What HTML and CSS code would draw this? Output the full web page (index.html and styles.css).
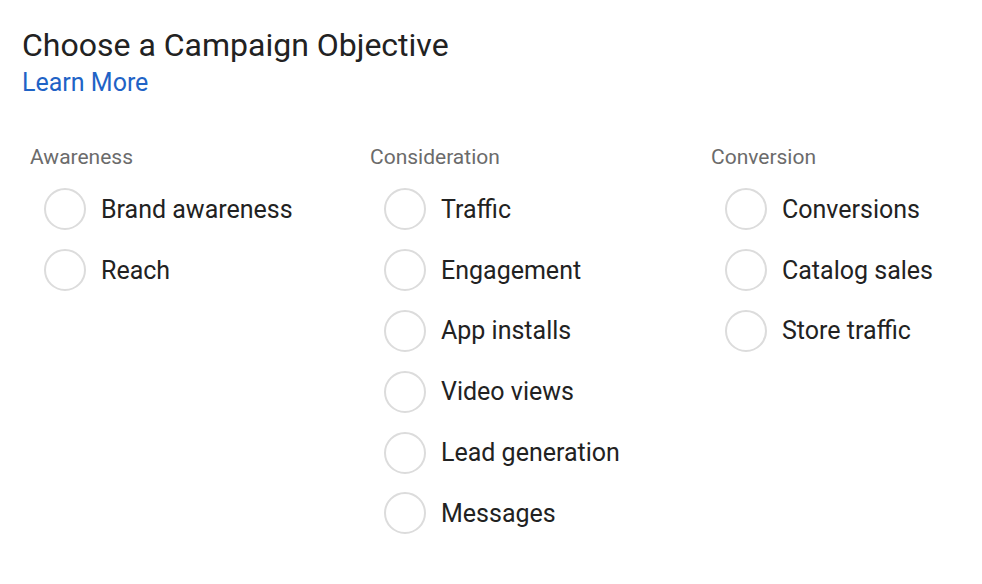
FILE: index.html
```html
<html lang="en">

<head>
    <meta charset="UTF-8">
    <meta name="viewport" content="width=device-width, initial-scale=1.0">
    <title>Campaign Objective</title>
    <link rel="stylesheet" href="styles.css">
</head>

<body>
    <div class="objective-container">
        <h1>Choose a Campaign Objective</h1>
        <a class="learn-more" href="#">Learn More</a>

        <div class="columns">
            <div class="column">
                <div class="column-title">Awareness</div>
                <label class="option"><span class="radio"></span>Brand awareness</label>
                <label class="option"><span class="radio"></span>Reach</label>
            </div>
            <div class="column">
                <div class="column-title">Consideration</div>
                <label class="option"><span class="radio"></span>Traffic</label>
                <label class="option"><span class="radio"></span>Engagement</label>
                <label class="option"><span class="radio"></span>App installs</label>
                <label class="option"><span class="radio"></span>Video views</label>
                <label class="option"><span class="radio"></span>Lead generation</label>
                <label class="option"><span class="radio"></span>Messages</label>
            </div>
            <div class="column">
                <div class="column-title">Conversion</div>
                <label class="option"><span class="radio"></span>Conversions</label>
                <label class="option"><span class="radio"></span>Catalog sales</label>
                <label class="option"><span class="radio"></span>Store traffic</label>
            </div>
        </div>
    </div>
</body>

</html>
```

FILE: styles.css
```css
body {
    font-family: Roboto, "Liberation Sans", sans-serif;
    background-color: #fff;
    color: #222;
    margin: 0;
}

.objective-container {
    padding: 25px 22px;
}

h1 {
    font-size: 32px;
    font-weight: 400;
    color: #222;
    margin: 0;
    line-height: 40px;
}

.learn-more {
    display: inline-block;
    font-size: 25px;
    color: #1f63c6;
    text-decoration: none;
    line-height: 32px;
    margin-top: 2px;
}

.columns {
    display: grid;
    grid-template-columns: 340px 341px 1fr;
    margin-top: 45px;
    padding-left: 8px;
}

.column-title {
    font-size: 21px;
    color: #6b6b6b;
    line-height: 26px;
    margin-bottom: 9px;
}

.option {
    display: flex;
    align-items: center;
    gap: 15px;
    padding-left: 14px;
    height: 60.8px;
    font-size: 25px;
    color: #222;
    cursor: pointer;
}

.radio {
    width: 38px;
    height: 38px;
    border: 2px solid #dcdcdc;
    border-radius: 50%;
    flex-shrink: 0;
}
```
